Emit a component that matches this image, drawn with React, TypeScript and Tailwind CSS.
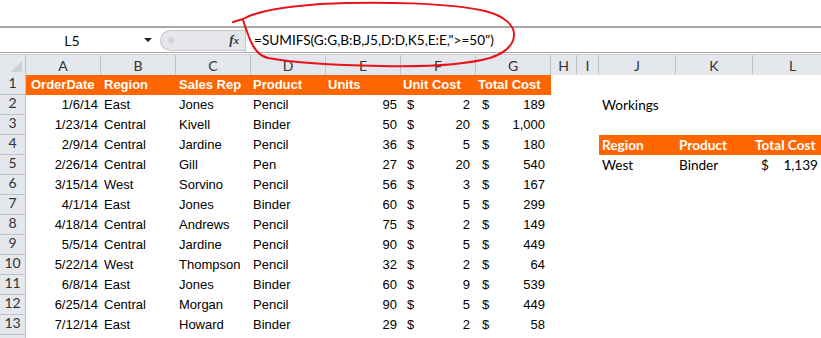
import React from 'react';

type Row = {
  date: string;
  region: string;
  rep: string;
  product: string;
  units: string;
  cost: string;
  total: string;
};

const rows: Row[] = [
  { date: '1/6/14', region: 'East', rep: 'Jones', product: 'Pencil', units: '95', cost: '2', total: '189' },
  { date: '1/23/14', region: 'Central', rep: 'Kivell', product: 'Binder', units: '50', cost: '20', total: '1,000' },
  { date: '2/9/14', region: 'Central', rep: 'Jardine', product: 'Pencil', units: '36', cost: '5', total: '180' },
  { date: '2/26/14', region: 'Central', rep: 'Gill', product: 'Pen', units: '27', cost: '20', total: '540' },
  { date: '3/15/14', region: 'West', rep: 'Sorvino', product: 'Pencil', units: '56', cost: '3', total: '167' },
  { date: '4/1/14', region: 'East', rep: 'Jones', product: 'Binder', units: '60', cost: '5', total: '299' },
  { date: '4/18/14', region: 'Central', rep: 'Andrews', product: 'Pencil', units: '75', cost: '2', total: '149' },
  { date: '5/5/14', region: 'Central', rep: 'Jardine', product: 'Pencil', units: '90', cost: '5', total: '449' },
  { date: '5/22/14', region: 'West', rep: 'Thompson', product: 'Pencil', units: '32', cost: '2', total: '64' },
  { date: '6/8/14', region: 'East', rep: 'Jones', product: 'Binder', units: '60', cost: '9', total: '539' },
  { date: '6/25/14', region: 'Central', rep: 'Morgan', product: 'Pencil', units: '90', cost: '5', total: '449' },
  { date: '7/12/14', region: 'East', rep: 'Howard', product: 'Binder', units: '29', cost: '2', total: '58' },
];

const letters = [
  { l: 'A', w: 'w-[75px]' },
  { l: 'B', w: 'w-[75px]' },
  { l: 'C', w: 'w-[75px]' },
  { l: 'D', w: 'w-[75px]' },
  { l: 'E', w: 'w-[75px]' },
  { l: 'F', w: 'w-[75px]' },
  { l: 'G', w: 'w-[75px]' },
  { l: 'H', w: 'w-[26px]' },
  { l: 'I', w: 'w-[22px]' },
  { l: 'J', w: 'w-[77px]' },
  { l: 'K', w: 'w-[77px]' },
  { l: 'L', w: 'w-[80px]' },
];

const arial = "font-['Liberation_Sans',Arial,sans-serif] text-[13px]";
const calibri = "font-['Lato','Liberation_Sans',sans-serif] text-[13.6px]";

function RowHead({ n }: { n?: number }) {
  return (
    <div className={`w-[26px] shrink-0 h-full flex items-end justify-center pb-[1px] bg-[#e4e7eb] border-r border-b border-[#bfc3c9] text-[#333] ${calibri} text-[14px]`}>
      {n}
    </div>
  );
}

function Money({ v, w = 'w-[75px]' }: { v: string; w?: string }) {
  return (
    <div className={`${w} shrink-0 flex justify-between pl-[6px] pr-[6px]`}>
      <span>$</span>
      <span>{v}</span>
    </div>
  );
}

function RightSide({ n }: { n: number }) {
  if (n === 2) {
    return (
      <div className={`flex ${calibri} text-black`}>
        <div className="w-[26px]" />
        <div className="w-[22px]" />
        <div className="w-[154px] pl-[3px] whitespace-nowrap">Workings</div>
      </div>
    );
  }
  if (n === 4) {
    return (
      <div className={`flex h-full items-center ${calibri} font-bold text-white`}>
        <div className="w-[26px]" />
        <div className="w-[22px]" />
        <div className="w-[77px] h-full flex items-center pl-[3px] bg-[#ff6600]">Region</div>
        <div className="w-[77px] h-full flex items-center pl-[3px] bg-[#ff6600]">Product</div>
        <div className="w-[80px] h-full flex items-center pl-[2px] bg-[#ff6600] whitespace-nowrap">Total Cost</div>
      </div>
    );
  }
  if (n === 5) {
    return (
      <div className={`flex ${calibri} text-black`}>
        <div className="w-[26px]" />
        <div className="w-[22px]" />
        <div className="w-[77px] pl-[3px]">West</div>
        <div className="w-[77px] pl-[3px]">Binder</div>
        <div className="w-[68px] flex justify-between pl-[8px] pr-[3px]">
          <span>$</span>
          <span>1,139</span>
        </div>
      </div>
    );
  }
  return null;
}

export default function App() {
  return (
    <div className="relative w-[821px] h-[338px] overflow-hidden bg-white">
      {/* blank ribbon space */}
      <div className="h-[26px] bg-white" />

      {/* formula bar */}
      <div className="h-[27px] flex items-center border-t-2 border-b border-[#a8a8a8] bg-white">
        <div className={`w-[158px] h-full flex items-center ${calibri} text-[14px] text-[#111]`}>
          <span className="w-[144px] text-center">L5</span>
          <span className="w-0 h-0 border-l-[4px] border-r-[4px] border-t-[4px] border-l-transparent border-r-transparent border-t-[#222]" />
        </div>
        <div className="ml-[2px] w-[85px] h-[21px] flex items-center rounded-l-full bg-[#e5e7ea] border border-r-0 border-[#c4c6ca]">
          <span className="ml-[6px] w-[9px] h-[9px] rounded-full bg-[#d2d4d7] border border-[#eceef0]" />
          <span className="ml-auto mr-[6px] font-['Liberation_Serif',serif] italic font-bold text-[13px] text-[#333]">
            f<span className="text-[11px]">x</span>
          </span>
        </div>
        <div className="h-full border-l border-[#c4c6ca]" />
        <div className={`pl-[8px] ${calibri} text-[13.1px] text-black whitespace-nowrap`}>
          =SUMIFS(G:G,B:B,J5,D:D,K5,E:E,"&gt;=50")
        </div>
      </div>
      <div className="h-[2px] bg-white border-b border-[#cfd1d4]" />

      {/* column headers */}
      <div className="h-[20px] flex bg-[#e4e7eb]">
        <div className="w-[26px] shrink-0 h-full flex items-end justify-end pr-[3px] pb-[3px] border-r border-[#bfc3c9]">
          <svg width="11" height="11" viewBox="0 0 11 11">
            <path d="M11,0 L11,11 L0,11 Z" fill="#cdd0d4" />
          </svg>
        </div>
        {letters.map((c) => (
          <div key={c.l} className={`${c.w} shrink-0 h-full flex items-center justify-center border-r border-[#bfc3c9] ${calibri} text-[14px] text-[#333]`}>
            {c.l}
          </div>
        ))}
      </div>

      {/* row 1 header */}
      <div className="h-[20px] flex">
        <RowHead n={1} />
        <div className={`w-[525px] shrink-0 flex items-center bg-[#ff6600] text-white font-bold ${arial}`}>
          <div className="w-[75px] pl-[5px] whitespace-nowrap">OrderDate</div>
          <div className="w-[75px] pl-[3px]">Region</div>
          <div className="w-[75px] pl-[3px]">Sales Rep</div>
          <div className="w-[75px] pl-[2px]">Product</div>
          <div className="w-[75px] pl-[2px]">Units</div>
          <div className="w-[75px] pl-[2px] whitespace-nowrap">Unit Cost</div>
          <div className="w-[75px] pl-[2px] whitespace-nowrap">Total Cost</div>
        </div>
      </div>

      {rows.map((r, i) => {
        const n = i + 2;
        return (
          <div key={n} className="h-[20px] flex">
            <RowHead n={n} />
            <div className={`w-[525px] shrink-0 flex items-center text-black ${arial}`}>
              <div className="w-[75px] text-right pr-[3px]">{r.date}</div>
              <div className="w-[75px] pl-[3px]">{r.region}</div>
              <div className="w-[75px] pl-[3px]">{r.rep}</div>
              <div className="w-[75px] pl-[2px]">{r.product}</div>
              <div className="w-[75px] text-right pr-[4px]">{r.units}</div>
              <Money v={r.cost} />
              <Money v={r.total} />
            </div>
            <div className="flex items-center h-full">
              <RightSide n={n} />
            </div>
          </div>
        );
      })}

      {/* row 14, cut off by the window edge */}
      <div className="h-[20px] flex">
        <RowHead />
      </div>

      {/* red hand-drawn annotation */}
      <svg className="absolute left-0 top-0 pointer-events-none" width="821" height="338" viewBox="0 0 821 338">
        <path
          d="M233,22 L243,19 C255,12 280,7 320,4 C380,1 450,3 485,11 C505,16 515,26 514,36 C513,46 505,53 490,58 C460,66 420,67 380,66 C330,65 290,62 268,58 C255,55 250,42 243,20"
          fill="none"
          stroke="#e8121a"
          strokeWidth="2"
          strokeLinecap="round"
          strokeLinejoin="round"
        />
      </svg>
    </div>
  );
}
